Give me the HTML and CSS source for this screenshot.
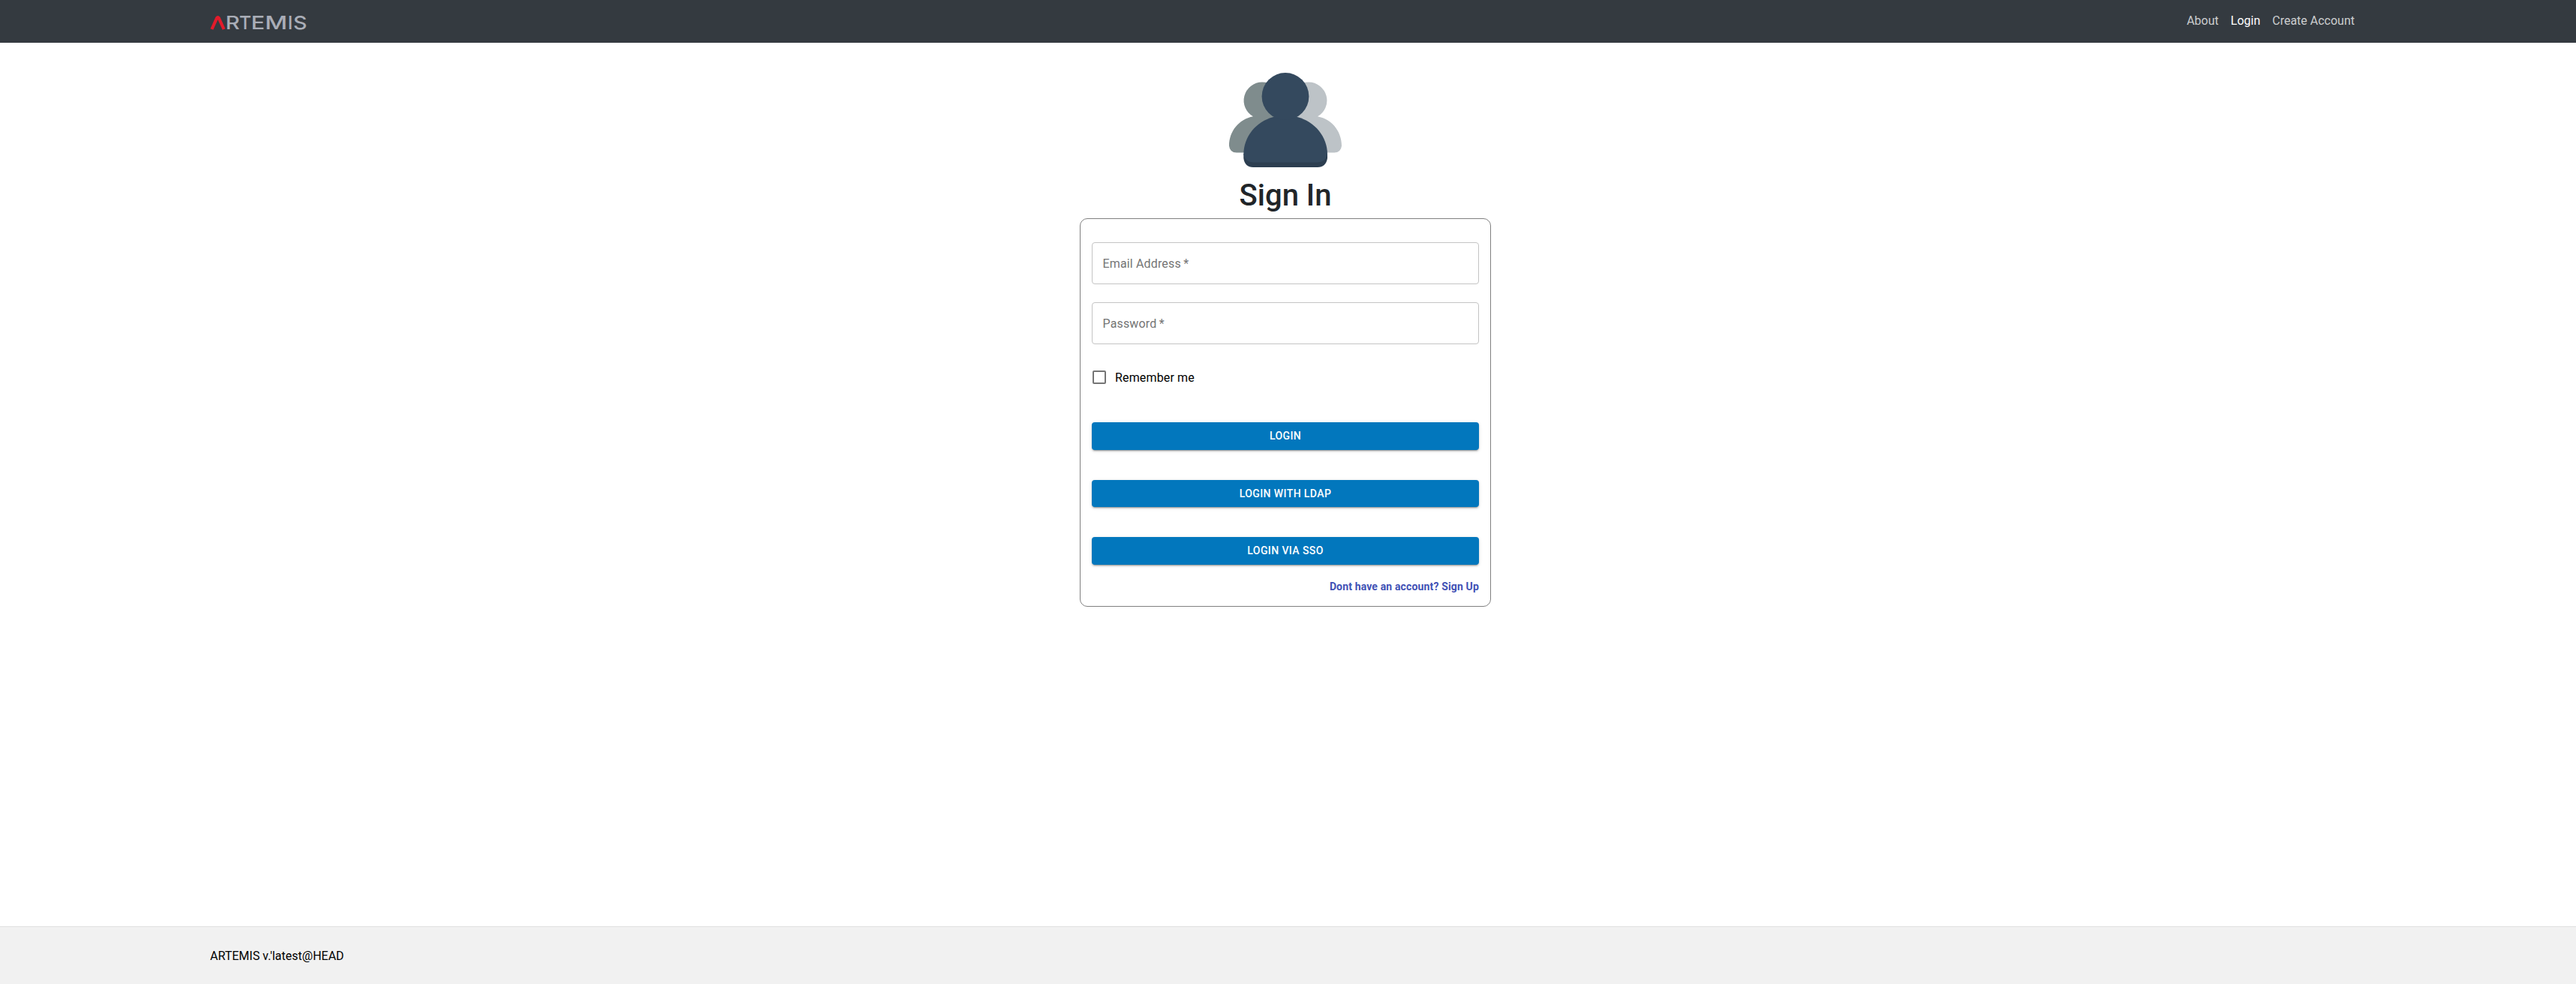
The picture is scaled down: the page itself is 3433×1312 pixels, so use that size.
FILE: index.html
```html
<!DOCTYPE html>
<html lang="en">
<head>
<meta charset="utf-8">
<title>ARTEMIS - Login</title>
<link rel="stylesheet" href="styles.css">
</head>
<body>
<header class="navbar">
  <a class="brand">
    <svg class="logo" width="130" height="24" viewBox="0 0 130 24">
      <path d="M2.300 19L9 4Q10.300 2.300 11.600 4L18.400 19" fill="none" stroke="#e31b2b" stroke-width="4.200"/>
      <g class="logo-text">
        <text x="20.600" y="19" textLength="19" lengthAdjust="spacingAndGlyphs">R</text>
        <text x="38.700" y="19">T</text>
        <text x="54.500" y="19" textLength="18.500" lengthAdjust="spacingAndGlyphs">E</text>
        <text x="73" y="19" textLength="30" lengthAdjust="spacingAndGlyphs">M</text>
        <text x="103.600" y="19">I</text>
        <text x="110.800" y="19" textLength="18.500" lengthAdjust="spacingAndGlyphs">S</text>
      </g>
    </svg>
  </a>
  <nav class="nav">
    <a class="nav-link">About</a>
    <a class="nav-link active">Login</a>
    <a class="nav-link">Create Account</a>
  </nav>
</header>
<main class="content">
  <svg class="users" width="150" height="126" viewBox="0 0 150 126">
    <path fill="#7f8c8d" d="M44 12.500a24.500 24.500 0 0 0-12 45.800C13 62 0 78 0 97.500Q1 106.500 10 106.500H75V30Q61 12.500 44 12.500Z"/>
    <path fill="#bdc3c7" d="M106 12.500a24.500 24.500 0 0 1 12 45.800C137 62 150 78 150 97.500Q149 106.500 140 106.500H75V30Q89 12.500 106 12.500Z"/>
    <path fill="#2c3e50" d="M19.300 108V114Q21 126 32 126H118Q129 126 131 114V108Z"/>
    <path fill="#34495e" d="M59 59C36 65 19.300 85 19.300 109Q22 119.500 32 119.500H118Q128 119.500 131 109C131 85 114 65 91 59Z"/>
    <circle cx="75" cy="31.500" r="31.400" fill="#34495e"/>
  </svg>
  <h1 class="title">Sign In</h1>
  <form class="card">
    <div class="field">Email Address&thinsp;*</div>
    <div class="field">Password&thinsp;*</div>
    <label class="remember"><span class="box"></span>Remember me</label>
    <div class="actions">
      <button class="button" type="button">LOGIN</button>
      <button class="button" type="button">LOGIN WITH LDAP</button>
      <button class="button" type="button">LOGIN VIA SSO</button>
    </div>
    <a class="signup">Dont have an account? Sign Up</a>
  </form>
</main>
<footer class="footer">ARTEMIS v.'latest@HEAD</footer>
</body>
</html>
```
FILE: styles.css
```css
* { box-sizing: border-box; }
body {
  margin: 0;
  height: 1312px;
  display: flex;
  flex-direction: column;
  background: #fff;
  color: #000;
  font: 400 16px/24px Roboto, sans-serif;
}
.navbar {
  height: 57px;
  flex: none;
  display: flex;
  align-items: center;
  justify-content: space-between;
  padding: 0 287px 0 280px;
  background: #343a40;
}
.brand { display: flex; padding-top: 6px; }
.logo { overflow: visible; }
.logo-text { font: 500 24.7px Inter, sans-serif; fill: #a9adb7; }
.nav { display: flex; padding-bottom: 1px; }
.nav-link { padding: 0 8px; color: rgba(255, 255, 255, .75); }
.nav-link.active { color: #fff; }
.content {
  flex: 1;
  display: flex;
  flex-direction: column;
  align-items: center;
  padding: 40px 7px 0 0;
}
.users { flex: none; }
.title {
  margin: 14px 0 6px;
  font-size: 40px;
  font-weight: 500;
  line-height: 48px;
  color: #212529;
}
.card {
  width: 548px;
  height: 518px;
  display: flex;
  flex-direction: column;
  padding: 31px 15px 0;
  border: 1px solid #808080;
  border-radius: 10px;
}
.field {
  height: 56px;
  margin-bottom: 24px;
  padding: 16px 13.5px;
  border: 1px solid #c4c4c4;
  border-radius: 4px;
  color: #757575;
  letter-spacing: .15px;
}
.remember {
  display: flex;
  align-items: center;
  gap: 12px;
  height: 42px;
  margin: 0 0 38px 1px;
  letter-spacing: .15px;
}
.box {
  width: 18px;
  height: 18px;
  margin-bottom: 2px;
  border: 2px solid #757575;
  border-radius: 2px;
}
.actions { display: flex; flex-direction: column; gap: 40px; }
.button {
  height: 36.5px;
  padding: 6px 16px;
  border: 0;
  border-radius: 4px;
  background: #0277bd;
  box-shadow: 0 3px 1px -2px rgba(0,0,0,.2), 0 2px 2px 0 rgba(0,0,0,.14), 0 1px 5px 0 rgba(0,0,0,.12);
  color: #fff;
  font: 500 14px/24.5px Roboto, sans-serif;
  letter-spacing: .4px;
}
.signup {
  align-self: flex-end;
  margin-top: 19px;
  font-size: 14px;
  line-height: 21px;
  font-weight: 700;
  letter-spacing: .15px;
  color: #3f51b5;
}
.footer {
  flex: none;
  height: 77px;
  padding: 27px 280px;
  border-top: 1px solid #e0e0e0;
  background: #f1f1f1;
}
```
